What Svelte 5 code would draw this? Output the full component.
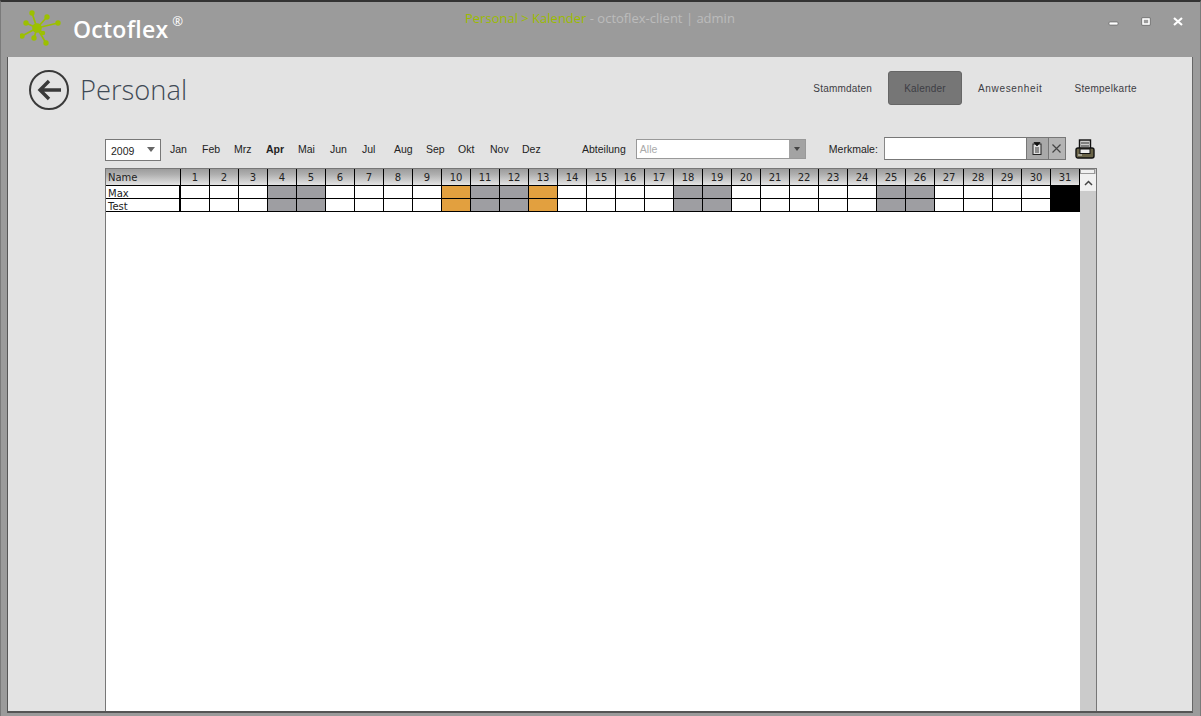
<script lang="ts">
const tabs = ["Stammdaten", "Kalender", "Anwesenheit", "Stempelkarte"];
const months = ["Jan", "Feb", "Mrz", "Apr", "Mai", "Jun", "Jul", "Aug", "Sep", "Okt", "Nov", "Dez"];
const days = Array.from({ length: 31 }, (_, i) => i + 1);
const people = ["Max", "Test"];
const weekend = [4, 5, 11, 12, 18, 19, 25, 26];
// logo arm ends, the hub sits at 17,18
const arms = [
	[12, 3],
	[27, 7],
	[38, 13],
	[23, 23],
	[26, 33],
	[14, 28],
	[2, 26],
	[6, 13]
];

function dayClass(day: number) {
	if (day === 31) return "black";
	if (day === 10 || day === 13) return "orange";
	if (weekend.includes(day)) return "gray";
	return "";
}
</script>

<div class="window">
	<header class="titlebar">
		<div class="brand">
			<svg class="logo" width="42" height="38" viewBox="0 0 42 38">
				{#each arms as [x, y], i}
					<line x1="17" y1="18" x2={x} y2={y} stroke="#9cc000" stroke-width="1.7" />
					<circle cx={x} cy={y} r={i === 3 ? 2.2 : 2.7} fill="#9cc000" />
				{/each}
				<circle cx="17" cy="18" r="4.8" fill="#9cc000" />
			</svg>
			<span class="name">Octoflex</span><span class="reg">®</span>
		</div>
		<div class="caption"><span class="crumb">Personal &gt; Kalender</span> - octoflex-client | admin</div>
		<div class="winbtns">
			<svg width="12" height="12" viewBox="0 0 12 12"><rect x="1" y="6" width="9" height="3" rx="1" fill="#fff" stroke="#555" stroke-width=".6" /></svg>
			<svg width="12" height="12" viewBox="0 0 12 12"><rect x="2" y="2" width="8" height="7" fill="none" stroke="#444" stroke-width=".6" /><rect x="3" y="3" width="6" height="5" fill="none" stroke="#fff" stroke-width="1.6" /></svg>
			<svg width="12" height="12" viewBox="0 0 12 12"><path d="M2 2l8 7M10 2l-8 7" stroke="#fff" stroke-width="2.2" /></svg>
		</div>
	</header>

	<main class="panel">
		<div class="top">
			<div class="heading">
				<svg width="40" height="40" viewBox="0 0 40 40">
					<circle cx="20" cy="20" r="19" fill="none" stroke="#3a3a3a" stroke-width="2" />
					<path d="M32 20H11M20 11l-9 9 9 9" fill="none" stroke="#3a3a3a" stroke-width="3.4" />
				</svg>
				<h1>Personal</h1>
			</div>
			<nav class="tabs">
				{#each tabs as tab}
					<div class="tab" class:active={tab === "Kalender"}>{tab}</div>
				{/each}
			</nav>
		</div>

		<div class="content">
			<div class="toolbar">
				<div class="year"><span>2009</span><i class="caret"></i></div>
				<div class="months">
					{#each months as m}
						<span class:current={m === "Apr"}>{m}</span>
					{/each}
				</div>
				<span class="label dept">Abteilung</span>
				<div class="combo">
					<span>Alle</span>
					<div class="combo-btn"><i class="caret small"></i></div>
				</div>
				<span class="label traits">Merkmale:</span>
				<div class="traits-field">
					<div class="traits-input"></div>
					<div class="tbtn clip">
						<svg width="10" height="13" viewBox="0 0 10 13">
							<rect x="1" y="2" width="8" height="10.5" fill="#ddd" stroke="#222" />
							<path d="M2 0.5h6L5 4zM3 6h4M3 8h4M3 10h4" fill="#111" stroke="#111" stroke-width=".8" />
						</svg>
					</div>
					<div class="tbtn clear">
						<svg width="9" height="9" viewBox="0 0 9 9"><path d="M.5.5l8 8M8.5.5l-8 8" stroke="#444" stroke-width="1.2" /></svg>
					</div>
				</div>
				<svg class="printer" width="20" height="20" viewBox="0 0 20 20">
					<rect x="4.500" y="1" width="11" height="10" fill="#ccc" stroke="#111" stroke-width="1.4" />
					<path d="M6 4h8M6 7h8" stroke="#333" />
					<rect x="1" y="9" width="18" height="10" rx="2" fill="#6a6448" stroke="#111" stroke-width="1.4" />
					<rect x="5" y="10" width="10" height="4.500" fill="#eee" stroke="#111" />
					<path d="M3 16h4" stroke="#ddd" />
				</svg>
			</div>

			<div class="sheet">
				<div class="table">
					<div class="row head">
						<div class="namecell">Name</div>
						{#each days as d}
							<div class="cell">{d}</div>
						{/each}
					</div>
					{#each people as p}
						<div class="row">
							<div class="namecell">{p}</div>
							{#each days as d}
								<div class="cell {dayClass(d)}"></div>
							{/each}
						</div>
					{/each}
				</div>
				<div class="scrollbar">
					<div class="sb-cap"></div>
					<div class="sb-up">
						<svg width="9" height="6" viewBox="0 0 9 6"><path d="M1 5l3.500-3.500L8 5" fill="none" stroke="#444" stroke-width="1.5" /></svg>
					</div>
				</div>
			</div>
		</div>
	</main>
</div>

<style>
	:global(body) {
		margin: 0;
		overflow: hidden;
	}

	.window {
		display: flex;
		flex-direction: column;
		box-sizing: border-box;
		width: 1201px;
		height: 716px;
		padding: 0 7px 3px 6px;
		background: #9b9b9b;
		border: 1px solid #7a7a7a;
		border-top: 2px solid #333;
		border-bottom: none;
		font-family: "Liberation Sans", Arial, sans-serif;
	}

	.titlebar {
		position: relative;
		display: flex;
		align-items: flex-start;
		justify-content: space-between;
		flex: 0 0 55px;
	}

	.brand {
		display: flex;
		align-items: flex-start;
		padding: 8px 0 0 13px;
		color: #fff;
	}

	.logo {
		margin-right: 11px;
	}

	.name {
		margin-top: 3px;
		font: 600 23px "Open Sans", sans-serif;
		letter-spacing: 0.25px;
	}

	.reg {
		margin: 2px 0 0 4px;
		font: 400 13px "Open Sans", sans-serif;
	}

	.caption {
		position: absolute;
		left: 458px;
		top: 7px;
		color: #bcbcbc;
		font: 400 13px "Open Sans", sans-serif;
	}

	.crumb {
		color: #9cbb00;
	}

	.winbtns {
		display: flex;
		gap: 20px;
		padding: 14px 9px 0 0;
	}

	.panel {
		flex: 1;
		min-height: 0;
		display: flex;
		flex-direction: column;
		background: #e3e3e3;
		border-left: 1px solid #555;
		border-right: 1px solid #666;
		border-bottom: 2px solid #555;
		overflow: hidden;
	}

	.top {
		display: flex;
		justify-content: space-between;
		flex: 0 0 81px;
	}

	.heading {
		display: flex;
		align-items: center;
		gap: 11px;
		padding: 13px 0 0 21px;
		height: 40px;
	}

	h1 {
		margin: 0 0 2px;
		color: #3f4a55;
		font: 300 27.300px "Open Sans", sans-serif;
	}

	.tabs {
		display: flex;
		padding: 14px 39px 0 0;
	}

	.tab {
		box-sizing: border-box;
		height: 34px;
		padding: 0 16px;
		display: flex;
		align-items: center;
		justify-content: center;
		color: #3d3d44;
		font-size: 10px;
		letter-spacing: 0.2px;
		border-radius: 3px;
	}

	.tab.active {
		width: 74px;
		padding: 0;
		background: #767676;
		border: 1px solid #666;
	}

	.tab:nth-child(3) {
		letter-spacing: 0.65px;
	}

	.tab:nth-child(4) {
		letter-spacing: 0.3px;
	}

	.content {
		flex: 1;
		min-height: 0;
		display: flex;
		flex-direction: column;
		padding-left: 97px;
		width: 992px;
	}

	.toolbar {
		display: flex;
		align-items: flex-start;
		flex: 0 0 23px;
		margin-bottom: 7px;
		color: #222;
		font-size: 10.500px;
		line-height: 22px;
	}

	.year {
		box-sizing: border-box;
		display: flex;
		align-items: center;
		justify-content: space-between;
		width: 56px;
		height: 22px;
		margin-top: 1px;
		padding: 1px 5px 0 5px;
		background: #fff;
		border: 1px solid #777;
	}

	.caret {
		width: 0;
		height: 0;
		margin-bottom: 2px;
		border-left: 4px solid transparent;
		border-right: 4px solid transparent;
		border-top: 5px solid #666;
	}

	.caret.small {
		margin: 0;
		border-top-color: #444;
		border-width: 4px 3.500px 0;
		border-top-style: solid;
	}

	.months {
		display: grid;
		grid-template-columns: repeat(12, 32px);
		margin-left: 9px;
	}

	.months span {
		white-space: nowrap;
	}

	.months .current {
		font-weight: 700;
	}

	.dept {
		margin-left: 28px;
	}

	.combo {
		box-sizing: border-box;
		display: flex;
		justify-content: space-between;
		align-items: center;
		width: 170px;
		height: 20px;
		margin: 1px 0 0 10px;
		background: #fff;
		border: 1px solid #999;
		color: #aaa;
		padding-left: 3px;
	}

	.combo-btn {
		width: 16px;
		height: 18px;
		display: flex;
		align-items: center;
		justify-content: center;
		background: #a3a3a3;
	}

	.traits {
		margin-left: 23px;
	}

	.traits-field {
		box-sizing: border-box;
		display: flex;
		width: 182px;
		height: 23px;
		margin: -1px 0 0 6px;
		border: 1px solid #777;
		border-left-color: #888;
	}

	.traits-input {
		flex: 1;
		background: #fff;
	}

	.tbtn {
		display: flex;
		align-items: center;
		justify-content: center;
		background: #a9a9a9;
	}

	.clip {
		width: 21px;
		border-left: 1px solid #777;
	}

	.clear {
		width: 16px;
		border-left: 1px solid #777;
		background: #b4b4b4;
	}

	.printer {
		margin: 1px 0 0 9px;
	}

	.sheet {
		flex: 1;
		min-height: 0;
		display: flex;
		box-sizing: border-box;
		background: #fff;
		border: 1px solid #777;
		border-bottom: none;
	}

	.table {
		width: 974px;
		font: 10px "DejaVu Sans", sans-serif;
		color: #222;
	}

	.row {
		display: grid;
		grid-template-columns: 75px repeat(31, 29px);
		grid-auto-rows: 12px;
		height: 13px;
		border-bottom: 1px solid #000;
		box-sizing: border-box;
	}

	.row.head {
		grid-auto-rows: 16px;
		height: 17px;
		background: linear-gradient(#9c9c9c, #b0b0b0 35%, #e4e4e4);
	}

	.namecell {
		box-sizing: border-box;
		padding-left: 2px;
		line-height: 15px;
		border-right: 2px solid #000;
		white-space: nowrap;
	}

	.head .namecell {
		line-height: 17px;
		border-right: 1px solid #000;
	}

	.cell {
		box-sizing: border-box;
		border-right: 1px solid #000;
		text-align: center;
		line-height: 17px;
	}

	.cell.gray {
		background: #9e9ea2;
	}

	.cell.orange {
		background: #e2a03f;
	}

	.cell.black {
		background: #000;
	}

	.scrollbar {
		flex: 1;
		background: #cbcbcb;
		display: flex;
		flex-direction: column;
	}

	.sb-cap {
		height: 5px;
		box-sizing: border-box;
		background: #f0f0f0;
		border: 1px solid #999;
		margin: 0 1px 0 0;
	}

	.sb-up {
		height: 17px;
		display: flex;
		align-items: center;
		justify-content: center;
		background: #f0f0f0;
	}
</style>
